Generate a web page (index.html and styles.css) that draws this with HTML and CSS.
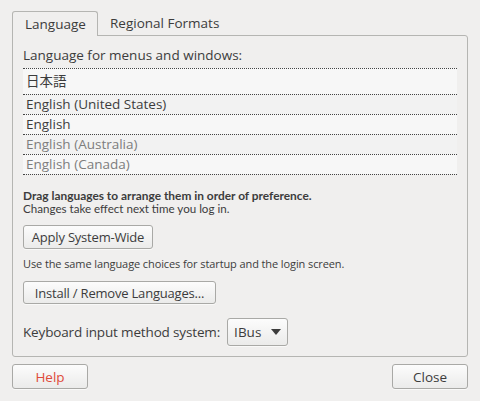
FILE: index.html
```html
<!DOCTYPE html>
<html>
<head>
<meta charset="utf-8">
<link rel="stylesheet" href="styles.css">
</head>
<body>
<div class="window">
  <div class="tabs">
    <div class="tab active">Language</div>
    <div class="tab">Regional Formats</div>
  </div>
  <div class="notebook">
    <div class="label">Language for menus and windows:</div>
    <div class="list">
      <div class="row cjk">日本語</div>
      <div class="row alt">English (United States)</div>
      <div class="row">English</div>
      <div class="row alt dim">English (Australia)</div>
      <div class="row dim">English (Canada)</div>
    </div>
    <div class="hint">
      <div class="hint-bold">Drag languages to arrange them in order of preference.</div>
      <div class="hint-line">Changes take effect next time you log in.</div>
    </div>
    <button class="btn apply">Apply System-Wide</button>
    <div class="note">Use the same language choices for startup and the login screen.</div>
    <button class="btn install">Install / Remove Languages...</button>
    <div class="kbd">
      <span>Keyboard input method system:</span>
      <button class="btn combo">IBus <span class="arrow"></span></button>
    </div>
  </div>
  <div class="footer">
    <button class="btn foot help">Help</button>
    <button class="btn foot">Close</button>
  </div>
</div>
</body>
</html>
```
FILE: styles.css
```css
html, body {
  margin: 0;
  background: #f0efee;
}
body {
  font-family: "Open Sans", "Noto Sans CJK JP", sans-serif;
  color: #3c3c3c;
  font-size: 13px;
  width: 480px;
  height: 401px;
  overflow: hidden;
}
.window {
  padding: 11px 12px 0 12px;
}
.tabs {
  display: flex;
  height: 24px;
}
.tab {
  box-sizing: border-box;
  height: 24px;
  padding: 0 12px;
  line-height: 24px;
  font-size: 13.5px;
}
.tab.active {
  width: 86px;
  border: 1px solid #b5b5b2;
  border-bottom: none;
  border-radius: 3px 3px 0 0;
  background: #f0efee;
  position: relative;
  z-index: 1;
  height: 25px;
}
.notebook {
  box-sizing: border-box;
  height: 322px;
  border: 1px solid #b5b5b2;
  border-radius: 0 3px 3px 3px;
  padding: 0 10px;
}
.label {
  margin-top: 10px;
  height: 22px;
  line-height: 18px;
  font-size: 13.5px;
}
.list {
  width: 434px;
  border-bottom: 1px dotted #444;
}
.row {
  box-sizing: border-box;
  height: 20px;
  line-height: 19px;
  padding-left: 3px;
  border-top: 1px dotted #444;
  background: #f7f7f7;
  font-size: 13.5px;
}
.row.alt {
  background: #f2f2f2;
}
.row.cjk {
  height: 26px;
  line-height: 25px;
}
.row.dim {
  color: #7d7d7d;
}
.hint {
  margin-top: 14px;
  font-family: Lato, "Open Sans", sans-serif;
  font-size: 11.6px;
}
.hint-bold {
  font-weight: 700;
  font-size: 11.9px;
  line-height: 13px;
}
.hint-line {
  line-height: 13px;
}
.btn {
  box-sizing: border-box;
  display: block;
  white-space: nowrap;
  font-family: inherit;
  color: #3c3c3c;
  font-size: 13px;
  border: 1px solid #a9a9a6;
  border-radius: 3px;
  background: linear-gradient(#fcfcfc, #ebebea);
  box-shadow: 0 1px 0 rgba(255,255,255,0.6);
  padding: 0 6px;
  margin: 0;
  height: 24px;
}
.apply {
  margin-top: 10px;
  width: 130px;
  letter-spacing: -0.2px;
}
.note {
  margin-top: 8px;
  font-size: 11px;
  line-height: 13px;
  letter-spacing: -0.1px;
}
.install {
  margin-top: 11px;
  width: 193px;
  height: 23px;
  letter-spacing: -0.2px;
}
.kbd {
  display: flex;
  align-items: center;
  gap: 7px;
  margin-top: 14px;
  font-size: 13.5px;
}
.kbd span {
  letter-spacing: -0.15px;
}
.combo {
  display: flex;
  align-items: center;
  gap: 10px;
  width: 61px;
  height: 28px;
  padding: 0 6px;
  font-size: 13.5px;
}
.combo .arrow {
  width: 0;
  height: 0;
  border-left: 5px solid transparent;
  border-right: 5px solid transparent;
  border-top: 6px solid #3c3c3c;
}
.footer {
  display: flex;
  justify-content: space-between;
  margin-top: 7px;
}
.foot {
  width: 76px;
  height: 25px;
  font-size: 13.5px;
}
.help {
  color: #df4a3a;
}
```
